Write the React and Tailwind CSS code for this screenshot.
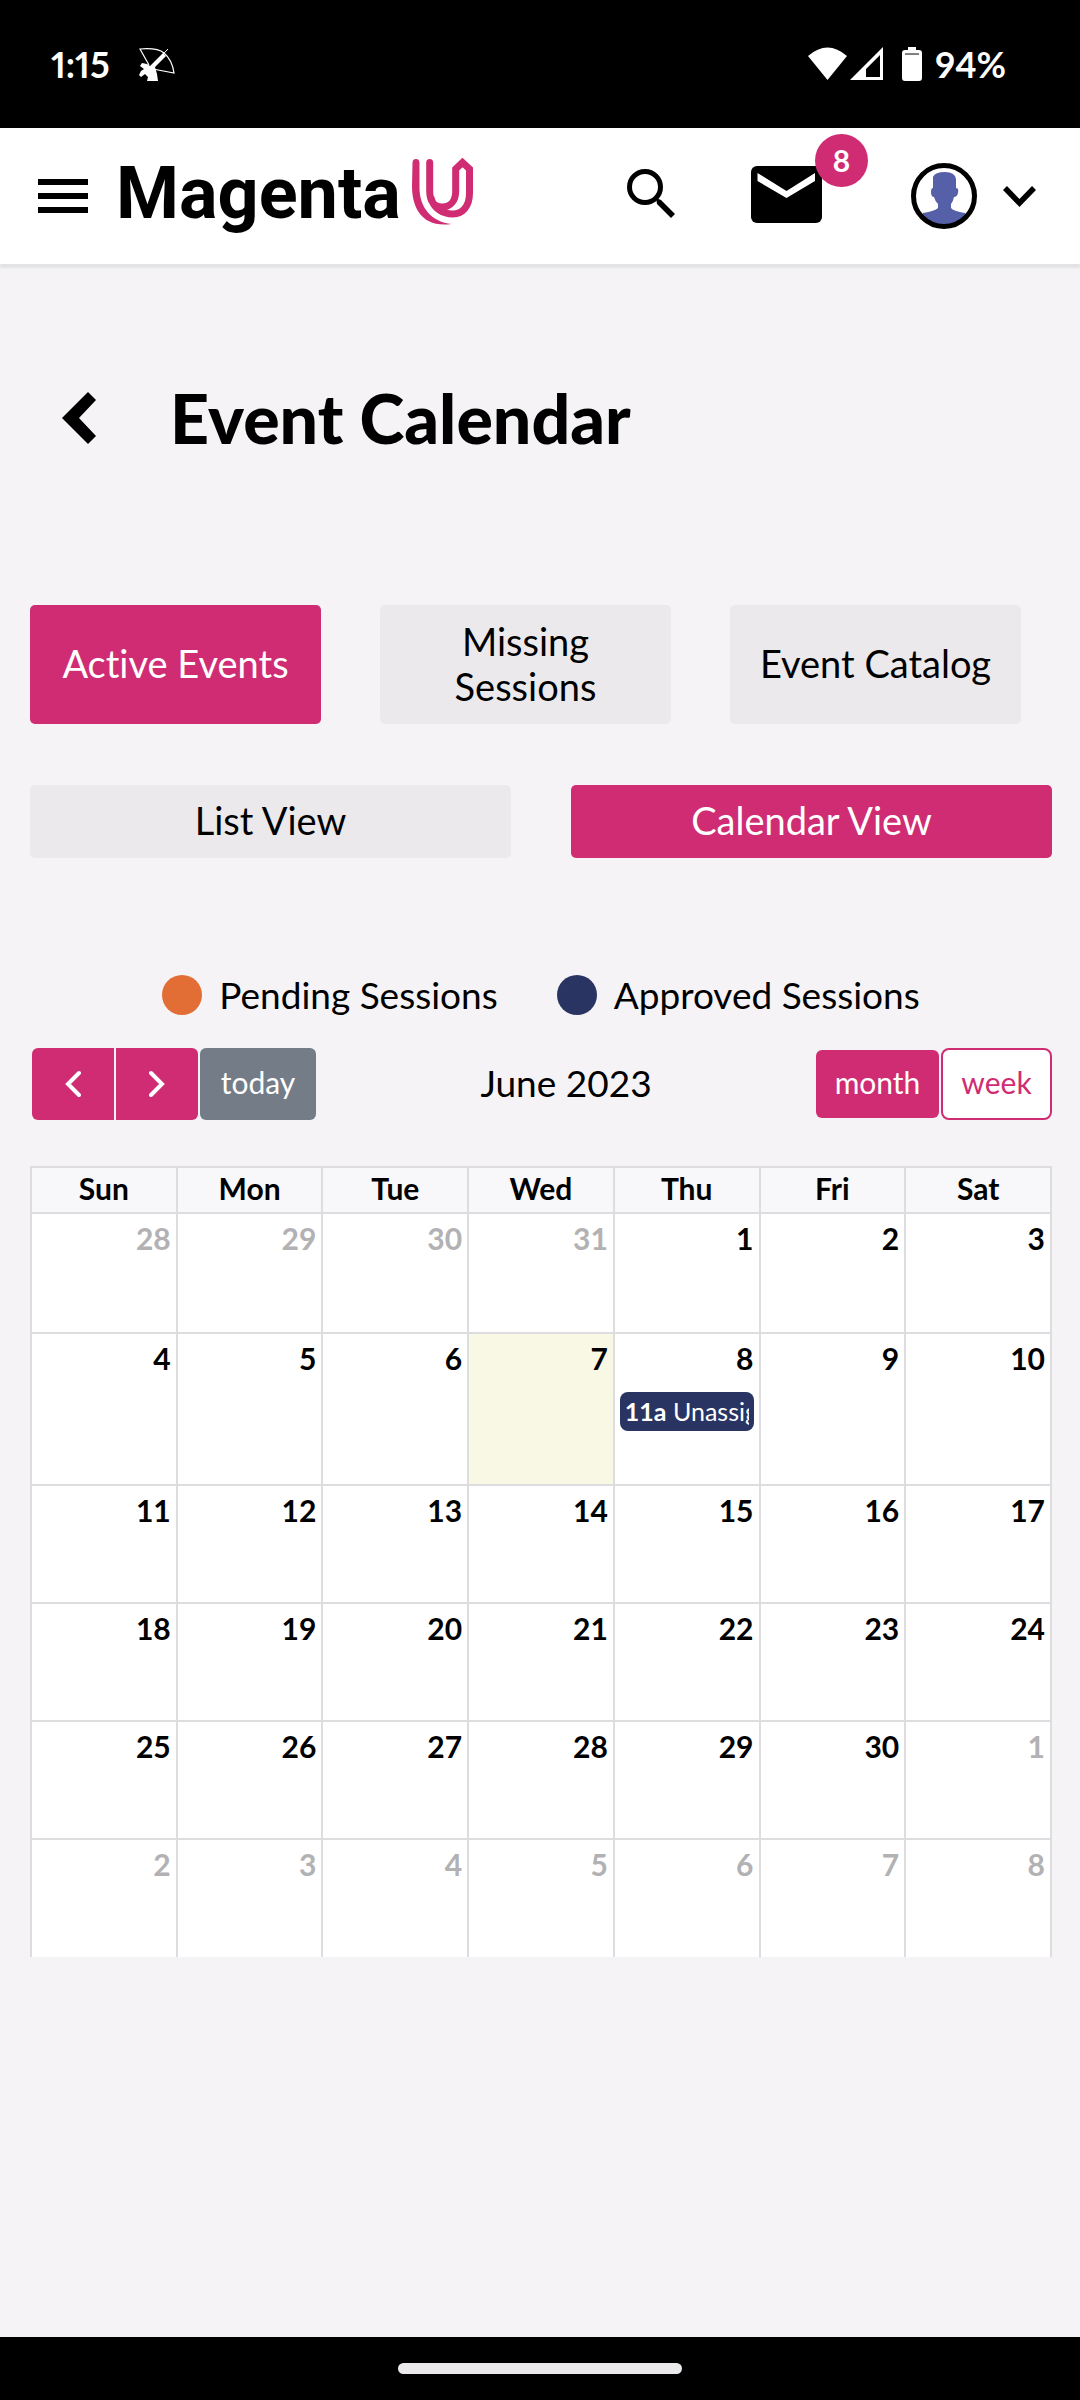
const tabs = ["Active Events", "Missing Sessions", "Event Catalog"];
const views = ["List View", "Calendar View"];
const weekdays = ["Sun", "Mon", "Tue", "Wed", "Thu", "Fri", "Sat"];

const legend = [
  { label: "Pending Sessions", dot: "bg-[#e26e36]" },
  { label: "Approved Sessions", dot: "bg-[#293462]" },
];

// May 28 - July 8, 2023
const weeks = Array.from({ length: 6 }, (_, w) =>
  Array.from({ length: 7 }, (_, d) => {
    const date = new Date(2023, 4, 28 + w * 7 + d);
    return { day: date.getDate(), month: date.getMonth() };
  })
);

const rowHeights = ["h-[120px]", "h-[152px]", "h-[118px]", "h-[118px]", "h-[118px]", "h-[118px]"];

function StatusBar() {
  return (
    <div className="h-32 shrink-0 bg-black text-white flex items-center justify-between pl-[51px] pr-[74px] text-[36px] leading-[44px] font-bold">
      <div className="flex items-center gap-7">
        <span className="proportional-nums">1:15</span>
        <svg className="w-[37px] h-[35px]" viewBox="0 0 37 35" fill="none" stroke="white">
          <path d="M11 18 L2 2 C14 1 21 2 26 6 C32 11 35 19 36 26 L15 22" strokeWidth="1.2" />
          <path d="M8 25 L30 2" strokeWidth="1" />
          <path d="M25 6 L28 9 L17 20 L19 27 L20 34 H9 L10 30 L7 27 L3 30 L1 28 L3 24 L6 22 L2 19 L4 16 L9 17 L12 19 Z" fill="white" stroke="none" />
        </svg>
      </div>
      <div className="flex items-center">
        <svg className="w-[115px] h-[35px]" viewBox="0 0 115 35" fill="white">
          <path d="M0 9 Q19.500 -8 39 9 L19.500 33 Z" />
          <path d="M75 0 V33 H42 Z M72 8 L58 22 V30 H72 Z" fillRule="evenodd" />
          <path d="M100 0 H108 V3 H111 Q114 3 114 6 V31 Q114 34 111 34 H97 Q94 34 94 31 V6 Q94 3 97 3 H100 Z" />
          <path d="M97 7 H111" stroke="black" />
        </svg>
        <span className="ml-3">94%</span>
      </div>
    </div>
  );
}

function Header() {
  return (
    <header className="h-[136px] shrink-0 bg-white flex items-center justify-between pl-[38px] pr-[44px] shadow-[0_4px_2px_#e3e3e4]">
      <div className="flex items-center gap-7">
        <button aria-label="Menu" className="flex flex-col gap-2">
          <span className="block w-[50px] h-1.5 bg-black" />
          <span className="block w-[50px] h-1.5 bg-black" />
          <span className="block w-[50px] h-1.5 bg-black" />
        </button>
        <a href="#home" className="flex items-center gap-[11px] pb-1">
          <span className="font-[Roboto] font-bold text-[72px] leading-[72px]">Magenta</span>
          <svg className="w-[62px] h-[68px] mb-1" viewBox="0 0 62 68">
            <path
              fill="#d02c73"
              d="M4 1 Q0.500 1 0.500 5 L0 28 C0 50 10 70 39.500 66 C20 64 7.500 50 7.500 30 V5 Q7.500 1 4 1 Z"
            />
            <path
              fill="none"
              stroke="#d02c73"
              strokeWidth="7"
              strokeLinecap="round"
              d="M17.700 4.500 V33 C17.700 43 22 49 30 49 C39 49 43.700 42 43.700 33 V11 L50.500 4.500 L57.500 11 V35 C57.500 49 50 56 41 56 C31 56 22 51 19 40"
            />
          </svg>
        </a>
      </div>
      <div className="flex items-center">
        <button aria-label="Search" className="mr-[76px] mb-1">
          <svg className="w-12 h-[50px]" viewBox="0 0 48 50" fill="none" stroke="black">
            <circle cx="18" cy="18" r="15.500" strokeWidth="5" />
            <path d="M29 29 L34 31 L48 45 L44 49 L30 35 Z" fill="black" stroke="none" />
          </svg>
        </button>
        <button aria-label="Messages, 8 unread" className="relative mr-[89px] mb-1">
          <svg className="w-[71px] h-[57px]" viewBox="0 0 71 57">
            <rect width="71" height="57" rx="6" />
            <path d="M6.500 7 L35.500 25 L64 7 V15 L35.500 32 L6.500 15 Z" fill="white" />
          </svg>
          <span className="absolute -top-8 left-16 size-[53px] rounded-full bg-[#d02c73] text-white text-[30px] leading-[53px] font-bold text-center">
            8
          </span>
        </button>
        <button aria-label="Account" className="flex items-center gap-[26px]">
          <svg className="size-[66px]" viewBox="0 0 66 66">
            <clipPath id="face">
              <circle cx="33" cy="33" r="29" />
            </clipPath>
            <path
              clipPath="url(#face)"
              fill="#5560a8"
              d="M22 25 V14 Q24 9 34 9 Q44 9 45 16 V25 Q48 25 47 30 Q46 34 43 34 Q42 39 40 41 V45 Q42 48 54 50 L58 66 H8 L12 50 Q24 48 27 45 V41 Q24 38 23 34 Q20 34 20 29 Q20 25 22 25 Z"
            />
            <circle cx="33" cy="33" r="30.500" fill="none" stroke="black" strokeWidth="5" />
          </svg>
          <svg className="w-[33px] h-[21px]" viewBox="0 0 33 21" fill="none" stroke="black" strokeWidth="5.500">
            <path d="M2 2 L16.500 17 L31 2" />
          </svg>
        </button>
      </div>
    </header>
  );
}

function Toolbar() {
  return (
    <div className="mt-[31px] flex items-center justify-between text-[30px] leading-9">
      <div className="flex items-center gap-0.5 pl-0.5">
        <button aria-label="Previous month" className="w-[82px] h-[72px] rounded-l-md bg-[#d02c73] flex items-center justify-center">
          <svg className="w-4 h-7" viewBox="0 0 16 28" fill="none" stroke="white" strokeWidth="4" strokeLinecap="round">
            <path d="M14 3 L3 14 L14 25" />
          </svg>
        </button>
        <button aria-label="Next month" className="w-[82px] h-[72px] rounded-r-md bg-[#d02c73] flex items-center justify-center">
          <svg className="w-4 h-7" viewBox="0 0 16 28" fill="none" stroke="white" strokeWidth="4" strokeLinecap="round">
            <path d="M2 3 L13 14 L2 25" />
          </svg>
        </button>
        <button className="w-[116px] h-[72px] pb-1 rounded-md bg-[#747d87] text-white">today</button>
      </div>
      <h2 className="pb-1 text-[37px] leading-[45px]">June 2023</h2>
      <div className="flex items-center justify-end gap-0.5">
        <button className="w-[123px] h-[68px] pb-1 rounded-md bg-[#d02c73] text-white">month</button>
        <button className="w-[111px] h-[72px] pb-1 rounded-lg border-2 border-[#d02c73] bg-white text-[#d02c73]">week</button>
      </div>
    </div>
  );
}

function Calendar() {
  return (
    <table className="mt-[46px] w-full table-fixed border-collapse text-[30px] leading-9">
      <thead>
        <tr className="h-[46px] bg-[#f8f7fa]">
          {weekdays.map((name) => (
            <th key={name} className="p-0 pb-1 border-2 border-[#dddcdf] font-bold">
              {name}
            </th>
          ))}
        </tr>
      </thead>
      <tbody>
        {weeks.map((week, w) => (
          <tr key={w} className={rowHeights[w]}>
            {week.map(({ day, month }) => {
              const today = month === 5 && day === 7;
              return (
                <td
                  key={`${month}-${day}`}
                  className={`px-[5px] pt-1.5 pb-0 align-top border-2 border-[#dddcdf] ${w === 5 ? "border-b-0" : ""} ${today ? "bg-[#f9f8e5]" : "bg-white"}`}
                >
                  <div className={`text-right font-bold ${month === 5 ? "text-black" : "text-[#b2b1b3]"}`}>{day}</div>
                  {month === 5 && day === 8 && (
                    <a href="#event" className="mt-4 block h-[39px] rounded-lg bg-[#293462] px-[5px] text-[25px] leading-[38px] text-white">
                      <span className="block overflow-hidden whitespace-nowrap">
                        <b>11a</b> Unassigned
                      </span>
                    </a>
                  )}
                </td>
              );
            })}
          </tr>
        ))}
      </tbody>
    </table>
  );
}

export default function App() {
  return (
    <div className="min-h-screen flex flex-col bg-[#f5f3f6] text-black font-[Lato,sans-serif] [font-variant-ligatures:none]">
      <StatusBar />
      <Header />
      <main className="flex-1 pl-[30px] pr-7">
        <div className="mt-[114px] flex items-center gap-[73px] pl-8">
          <button aria-label="Back">
            <svg className="w-[35px] h-[52px]" viewBox="0 0 35 52">
              <path d="M26 0 L34 8 L17 26 L34 44 L26 52 L0 26 Z" />
            </svg>
          </button>
          <h1 className="text-[68px] leading-20 font-black">Event Calendar</h1>
        </div>

        <div className="mt-[147px] grid grid-cols-3 gap-[59px] pr-[31px] text-[38px] leading-[45px]">
          {tabs.map((tab, i) => (
            <button
              key={tab}
              className={`h-[119px] px-6 pb-0.5 rounded-[5px] ${i === 0 ? "bg-[#d02c73] text-white" : "bg-[#ebe9ec]"}`}
            >
              {tab}
            </button>
          ))}
        </div>
        <div className="mt-[61px] grid grid-cols-2 gap-[60px] text-[38px] leading-[45px]">
          {views.map((view, i) => (
            <button
              key={view}
              className={`h-[73px] pb-0.5 rounded-[5px] ${i === 1 ? "bg-[#d02c73] text-white" : "bg-[#ebe9ec]"}`}
            >
              {view}
            </button>
          ))}
        </div>

        <ul className="mt-[114px] flex justify-center gap-[59px] text-[37px] leading-[45px]">
          {legend.map(({ label, dot }) => (
            <li key={label} className="flex items-center gap-[17px]">
              <span className={`size-10 rounded-full ${dot}`} />
              {label}
            </li>
          ))}
        </ul>

        <Toolbar />
        <Calendar />
      </main>
      <div className="h-[63px] shrink-0 bg-black flex items-center justify-center">
        <span className="w-[284px] h-[11px] rounded-full bg-[#ebe9ec]" />
      </div>
    </div>
  );
}
